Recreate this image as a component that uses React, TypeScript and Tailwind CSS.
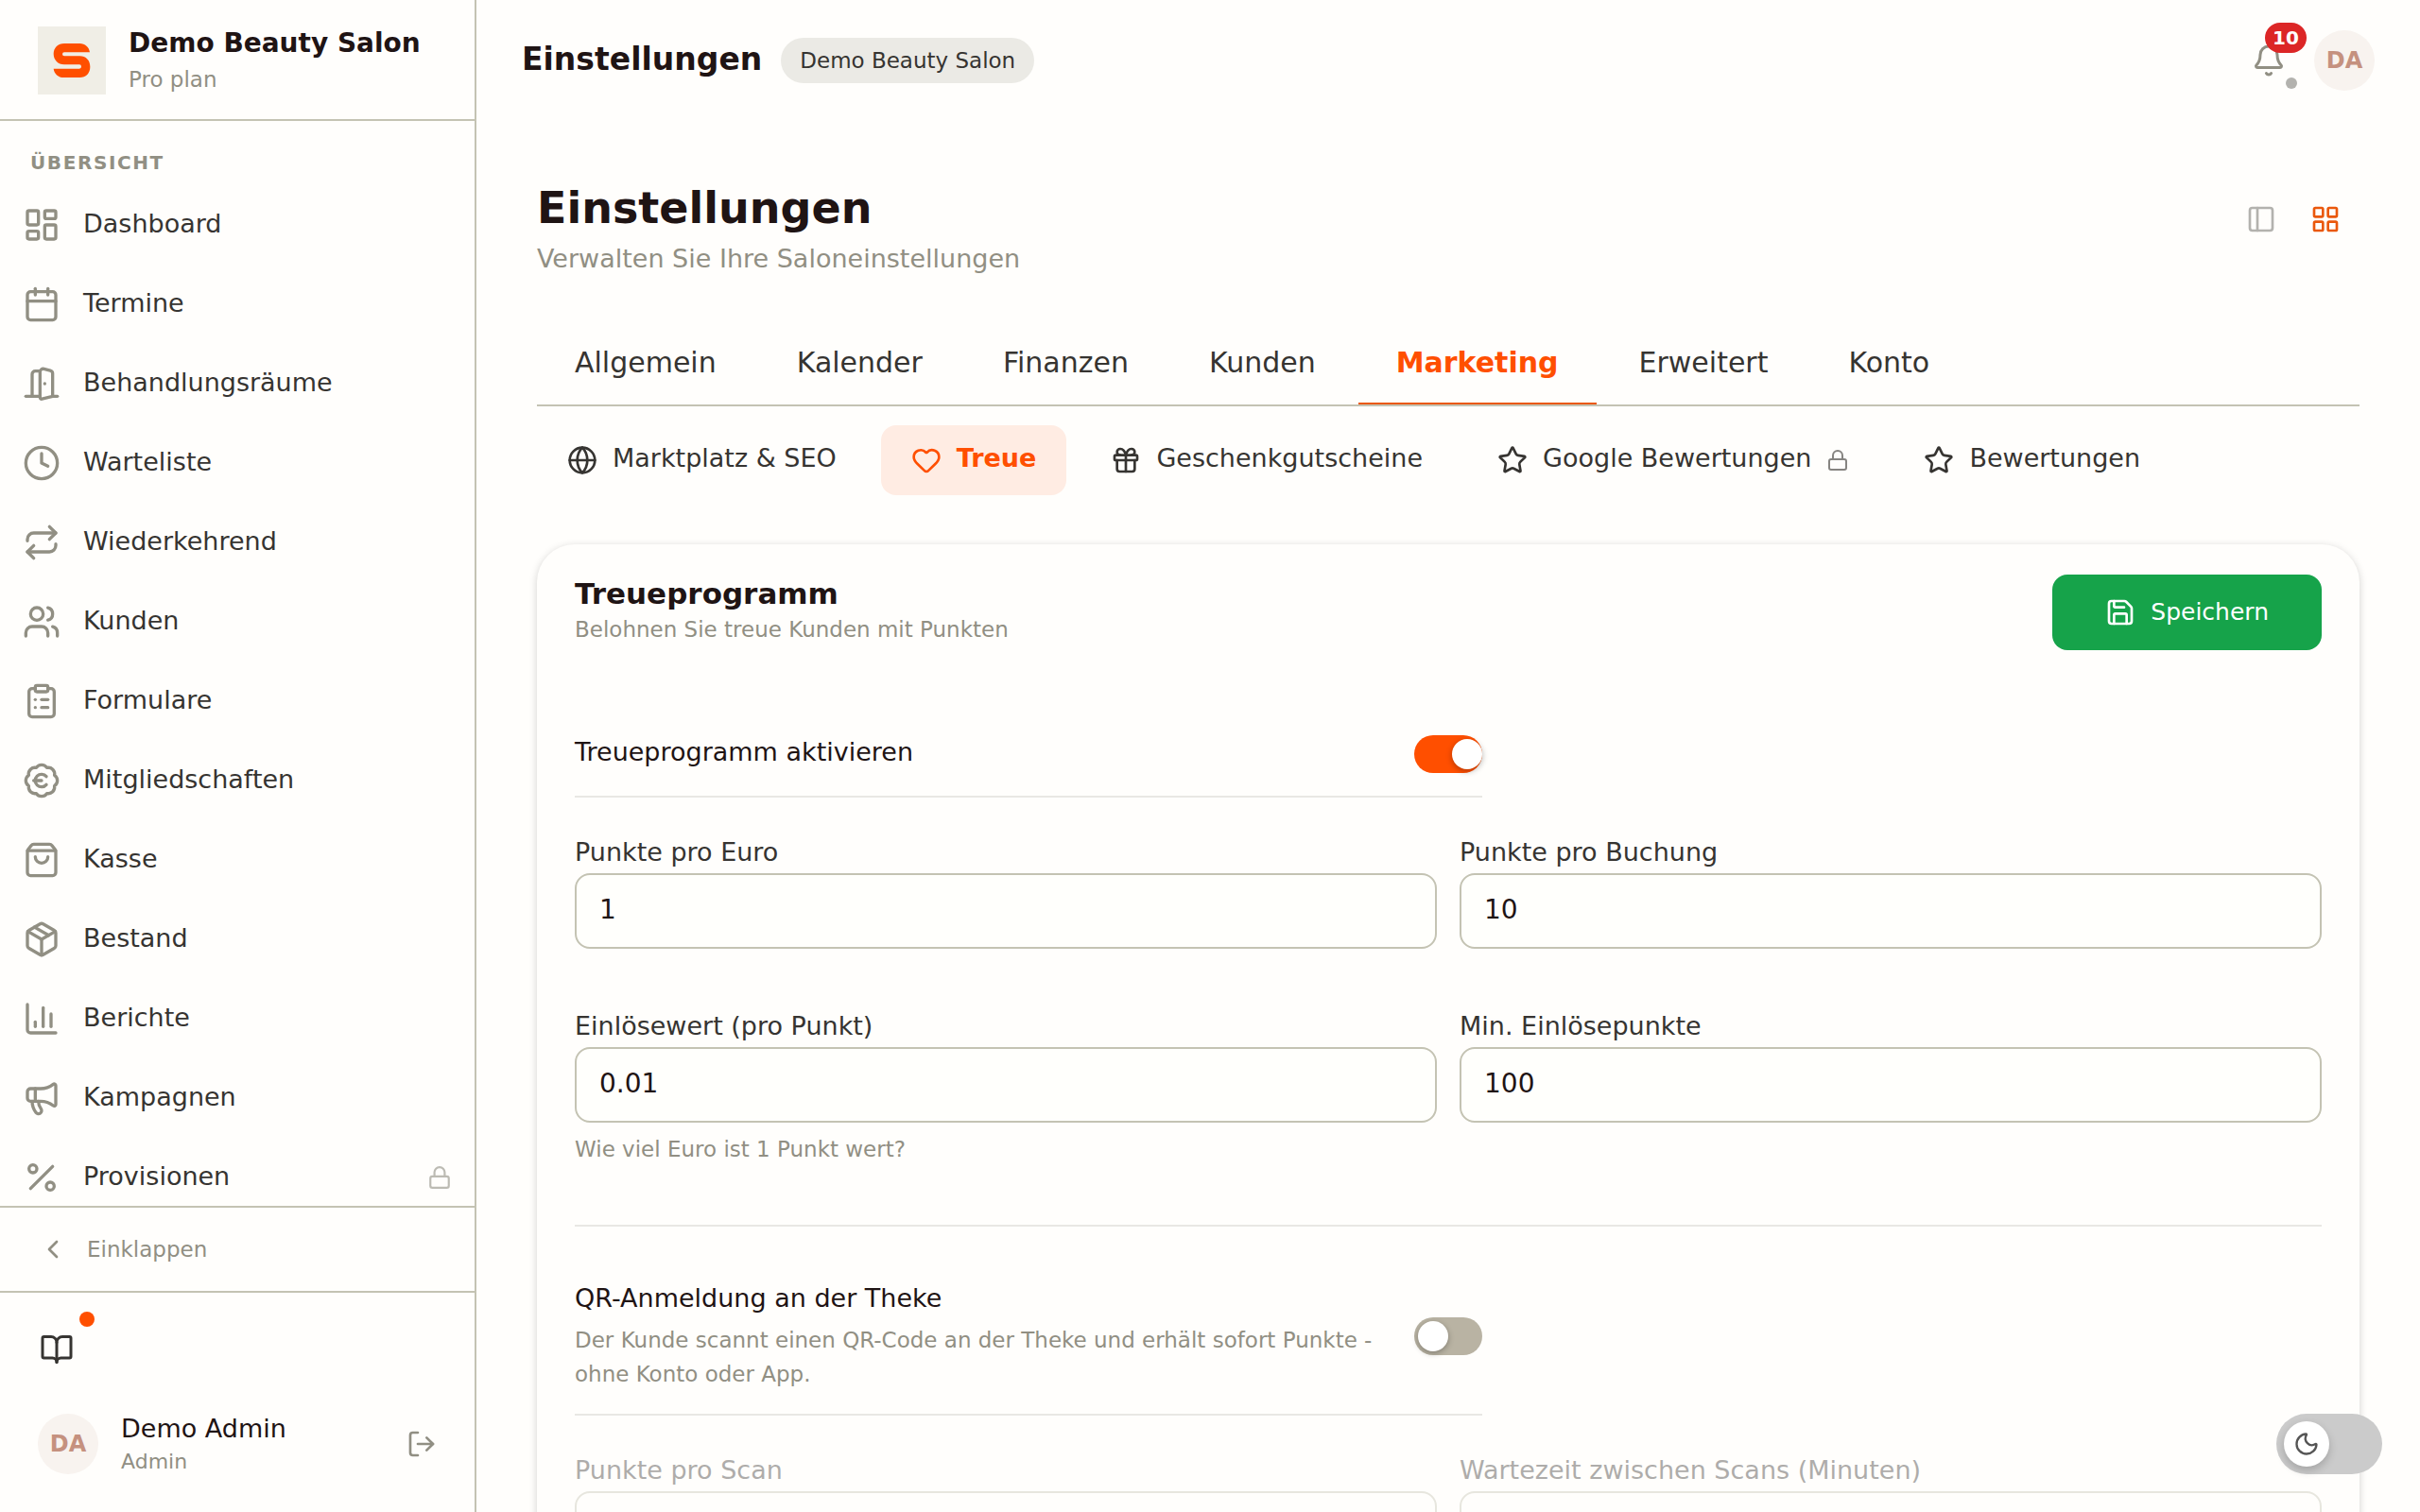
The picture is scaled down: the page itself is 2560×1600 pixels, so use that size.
import { useState, type ReactNode } from "react";
import {
    BadgeEuro,
    Bell,
    BookOpen,
    Calendar,
    ChartColumn,
    ChevronLeft,
    ClipboardList,
    Clock,
    DoorOpen,
    Gift,
    Globe,
    Heart,
    LayoutDashboard,
    LayoutGrid,
    Lock,
    LogOut,
    Megaphone,
    Moon,
    Package,
    PanelLeft,
    Percent,
    Repeat,
    Save,
    ShoppingBag,
    Star,
    Users,
} from "lucide-react";

const navItems = [
    { label: "Dashboard", icon: LayoutDashboard },
    { label: "Termine", icon: Calendar },
    { label: "Behandlungsräume", icon: DoorOpen },
    { label: "Warteliste", icon: Clock },
    { label: "Wiederkehrend", icon: Repeat },
    { label: "Kunden", icon: Users },
    { label: "Formulare", icon: ClipboardList },
    { label: "Mitgliedschaften", icon: BadgeEuro },
    { label: "Kasse", icon: ShoppingBag },
    { label: "Bestand", icon: Package },
    { label: "Berichte", icon: ChartColumn },
    { label: "Kampagnen", icon: Megaphone },
    { label: "Provisionen", icon: Percent, locked: true },
];

const tabs = ["Allgemein", "Kalender", "Finanzen", "Kunden", "Marketing", "Erweitert", "Konto"];

const subTabs = [
    { label: "Marktplatz & SEO", icon: Globe },
    { label: "Treue", icon: Heart },
    { label: "Geschenkgutscheine", icon: Gift },
    { label: "Google Bewertungen", icon: Star, locked: true },
    { label: "Bewertungen", icon: Star },
];

const Logo = () => (
    <svg viewBox="0 0 216 216" className="size-18 shrink-0 bg-[#f0eee6]" aria-hidden="true">
        <path
            fill="#ff4f00"
            d="M165 82C163 66 150 54 133 54H84C64 54 50 68 50 87S64 121 84 121H132Q138 121 138 127.500T132 134H50C52 150 65 162 82 162H133C153 162 166 148 166 128S153 94 133 94H84Q78 94 78 88T84 82Z"
        />
    </svg>
);

const Avatar = () => (
    <span className="flex size-16 shrink-0 items-center justify-center rounded-full bg-[#f8f3ef] text-2xl font-bold text-[#c5917f]">
        DA
    </span>
);

const Sidebar = () => (
    <aside className="flex w-[504px] shrink-0 flex-col border-r-2 border-[#c4c3b3]">
        <div className="flex h-32 shrink-0 items-center gap-6 border-b-2 border-[#c4c3b3] px-10 pt-0.5">
            <Logo />
            <div>
                <div className="text-[28px] leading-10 font-bold text-[#1f1414]">Demo Beauty Salon</div>
                <div className="text-[23px] leading-9 text-[#918f83]">Pro plan</div>
            </div>
        </div>

        <nav className="min-h-0 flex-1 overflow-hidden pt-8">
            <h2 className="mb-3.5 px-8 text-xl leading-6 font-bold tracking-[0.08em] text-[#918f83] uppercase">
                Übersicht
            </h2>
            <ul className="flex flex-col gap-1">
                {navItems.map(({ label, icon: Icon, locked }) => (
                    <li key={label}>
                        <a href="#" className="flex h-20 items-center gap-6 px-6 text-[27px] text-[#363431]">
                            <Icon className="size-10 text-[#918f83]" />
                            <span className="flex-1 pb-0.5">{label}</span>
                            {locked && <Lock className="size-[26px] text-[#918f83] opacity-60" />}
                        </a>
                    </li>
                ))}
            </ul>
        </nav>

        <button className="flex h-[92px] shrink-0 items-center gap-5 border-y-2 border-[#c4c3b3] px-10 text-[23px] text-[#918f83]">
            <ChevronLeft className="size-8" />
            Einklappen
        </button>

        <div className="shrink-0 pt-6 pb-9">
            <button
                aria-label="Handbuch"
                className="relative ml-6 flex size-18 items-center justify-center text-[#363431]"
            >
                <BookOpen className="size-9" />
                <span className="absolute -top-1 -right-1 size-4 rounded-full bg-[#ff4f00]" />
            </button>
            <div className="mt-7 flex items-center gap-6 px-10">
                <Avatar />
                <div className="flex-1 pt-0.5">
                    <div className="text-[27px] leading-9 text-[#1f1414]">Demo Admin</div>
                    <div className="text-[22px] leading-[34px] text-[#918f83]">Admin</div>
                </div>
                <button aria-label="Abmelden" className="text-[#918f83]">
                    <LogOut className="size-8" />
                </button>
            </div>
        </div>
    </aside>
);

const Header = () => (
    <header className="flex h-32 shrink-0 items-center gap-5 px-12">
        <span className="pb-0.5 text-[33px] font-bold text-[#1f1414]">Einstellungen</span>
        <span className="flex h-12 items-center rounded-full bg-[#ebeae5] px-5 text-[23px] text-[#363431]">
            Demo Beauty Salon
        </span>
        <div className="ml-auto flex items-center gap-2">
            <button aria-label="Benachrichtigungen" className="relative flex size-20 items-center justify-center text-[#918f83]">
                <Bell className="size-9" />
                <span className="absolute top-0 right-0 flex h-8 w-11 items-center justify-center rounded-full bg-[#dc2626] text-xl font-bold text-white">
                    10
                </span>
                <span className="absolute right-2.5 bottom-2.5 size-3 rounded-full bg-[#b3b2ae]" />
            </button>
            <Avatar />
        </div>
    </header>
);

const Switch = ({ id, defaultChecked }: { id: string; defaultChecked?: boolean }) => (
    <label htmlFor={id} className="relative h-10 w-18 shrink-0 cursor-pointer">
        <input id={id} type="checkbox" role="switch" defaultChecked={defaultChecked} className="peer sr-only" />
        <span className="block h-10 rounded-full bg-[#b9b3a3] peer-checked:bg-[#ff4f00]" />
        <span className="absolute top-1 left-1 size-8 rounded-full bg-white shadow-[0_2px_6px_rgba(0,0,0,0.3)] peer-checked:left-10" />
    </label>
);

const SwitchRow = ({ id, title, hint, defaultChecked }: { id: string; title: string; hint?: string; defaultChecked?: boolean }) => (
    <div className="flex max-w-[960px] items-center gap-6 border-b-2 border-[#e9e8e4] py-6">
        <div className="flex-1">
            <label htmlFor={id} className="block text-[27px] leading-9 text-[#1f1414]">
                {title}
            </label>
            {hint ? <p className="mt-2 text-[23px] leading-9 text-[#918f83]">{hint}</p> : <div className="h-1" />}
        </div>
        <Switch id={id} defaultChecked={defaultChecked} />
    </div>
);

const Field = ({ id, label, value, hint }: { id: string; label: string; value: string; hint?: string }) => (
    <div>
        <label htmlFor={id} className="block text-[27px] leading-11 text-[#363431]">
            {label}
        </label>
        <input
            id={id}
            type="text"
            inputMode="decimal"
            defaultValue={value}
            className="block h-20 w-full rounded-2xl border-2 border-[#c4c3b3] bg-[#fffffc] px-6 pb-1 text-[28px] text-[#1f1414]"
        />
        {hint && <p className="mt-2.5 text-[23px] leading-9 text-[#918f83]">{hint}</p>}
    </div>
);

const FieldGrid = ({ children, muted }: { children: ReactNode; muted?: boolean }) => (
    <div className={`mt-9 grid grid-cols-2 gap-x-6 gap-y-15 ${muted ? "opacity-40" : ""}`}>{children}</div>
);

const LoyaltyCard = () => (
    <section className="mt-13 rounded-[40px] bg-[#fffefc] px-10 py-8 shadow-[0_2px_8px_rgba(0,0,0,0.18)]">
        <div className="flex items-start justify-between">
            <div>
                <h2 className="text-[31px] leading-10 font-bold text-[#1f1414]">Treueprogramm</h2>
                <p className="text-[23px] leading-9 text-[#918f83]">Belohnen Sie treue Kunden mit Punkten</p>
            </div>
            <button className="flex h-20 items-center gap-4 rounded-2xl bg-[#16a34a] px-14 text-[25px] text-white">
                <Save className="size-8" />
                Speichern
            </button>
        </div>

        <div className="mt-[66px]">
            <SwitchRow id="loyalty" title="Treueprogramm aktivieren" defaultChecked />
        </div>
        <FieldGrid>
            <Field id="per-euro" label="Punkte pro Euro" value="1" />
            <Field id="per-booking" label="Punkte pro Buchung" value="10" />
            <Field id="value" label="Einlösewert (pro Punkt)" value="0.01" hint="Wie viel Euro ist 1 Punkt wert?" />
            <Field id="minimum" label="Min. Einlösepunkte" value="100" />
        </FieldGrid>

        <div className="mt-[62px] border-t-2 border-[#e9e8e4] pt-[34px]">
            <SwitchRow
                id="qr"
                title="QR-Anmeldung an der Theke"
                hint="Der Kunde scannt einen QR-Code an der Theke und erhält sofort Punkte - ohne Konto oder App."
            />
        </div>
        <FieldGrid muted>
            <Field id="per-scan" label="Punkte pro Scan" value="10" />
            <Field id="wait" label="Wartezeit zwischen Scans (Minuten)" value="60" />
        </FieldGrid>
    </section>
);

const ThemeToggle = () => (
    <label className="fixed right-10 bottom-10 h-16 w-28 cursor-pointer">
        <input type="checkbox" role="switch" aria-label="Dunkles Design" className="peer sr-only" />
        <span className="block h-16 rounded-full bg-[#cbcbcb]" />
        <span className="absolute top-2 left-2 flex size-12 items-center justify-center rounded-full bg-white text-[#555555] shadow-[0_4px_10px_rgba(0,0,0,0.2)] peer-checked:left-14">
            <Moon className="size-7" />
        </span>
    </label>
);

const App = () => {
    const [tab, setTab] = useState("Marketing");
    const [subTab, setSubTab] = useState("Treue");

    return (
        <div className="flex h-screen overflow-hidden bg-[#fffefc] font-['DejaVu_Sans',sans-serif]">
            <Sidebar />
            <div className="flex min-w-0 flex-1 flex-col">
                <Header />
                <main className="min-h-0 flex-1 overflow-hidden px-16 pt-16">
                    <div className="flex items-start justify-between">
                        <div>
                            <h1 className="text-[46px] leading-14 font-bold text-[#1f1414]">Einstellungen</h1>
                            <p className="mt-1 text-[27px] leading-11 text-[#918f83]">Verwalten Sie Ihre Saloneinstellungen</p>
                        </div>
                        <div className="flex gap-1 pr-1">
                            <button aria-label="Seitenleiste" className="flex h-20 w-16 items-center justify-center text-[#b3b2ae]">
                                <PanelLeft className="size-8" />
                            </button>
                            <button aria-label="Raster" className="flex h-20 w-16 items-center justify-center text-[#ea580c]">
                                <LayoutGrid className="size-8" />
                            </button>
                        </div>
                    </div>

                    <div role="tablist" className="mt-11 flex gap-[5px] border-b-2 border-[#c4c3b3]">
                        {tabs.map((name) => (
                            <button
                                key={name}
                                role="tab"
                                aria-selected={name === tab}
                                onClick={() => setTab(name)}
                                className={`h-22 border-b-2 px-10 text-[30px] ${
                                    name === tab ? "border-[#ea580c] font-bold text-[#ff4f00]" : "border-transparent text-[#363431]"
                                }`}
                            >
                                {name}
                            </button>
                        ))}
                    </div>

                    <div role="tablist" className="mt-5 flex gap-[15px]">
                        {subTabs.map(({ label, icon: Icon, locked }) => (
                            <button
                                key={label}
                                role="tab"
                                aria-selected={label === subTab}
                                onClick={() => setSubTab(label)}
                                className={`flex h-[74px] items-center gap-4 rounded-2xl px-8 text-[27px] ${
                                    label === subTab ? "bg-[#ffece3] font-bold text-[#ff4f00]" : "text-[#363431]"
                                }`}
                            >
                                <Icon className="size-8" />
                                <span className="pb-1">{label}</span>
                                {locked && <Lock className="size-6 opacity-60" />}
                            </button>
                        ))}
                    </div>

                    <LoyaltyCard />
                </main>
            </div>
            <ThemeToggle />
        </div>
    );
};

export default App;
